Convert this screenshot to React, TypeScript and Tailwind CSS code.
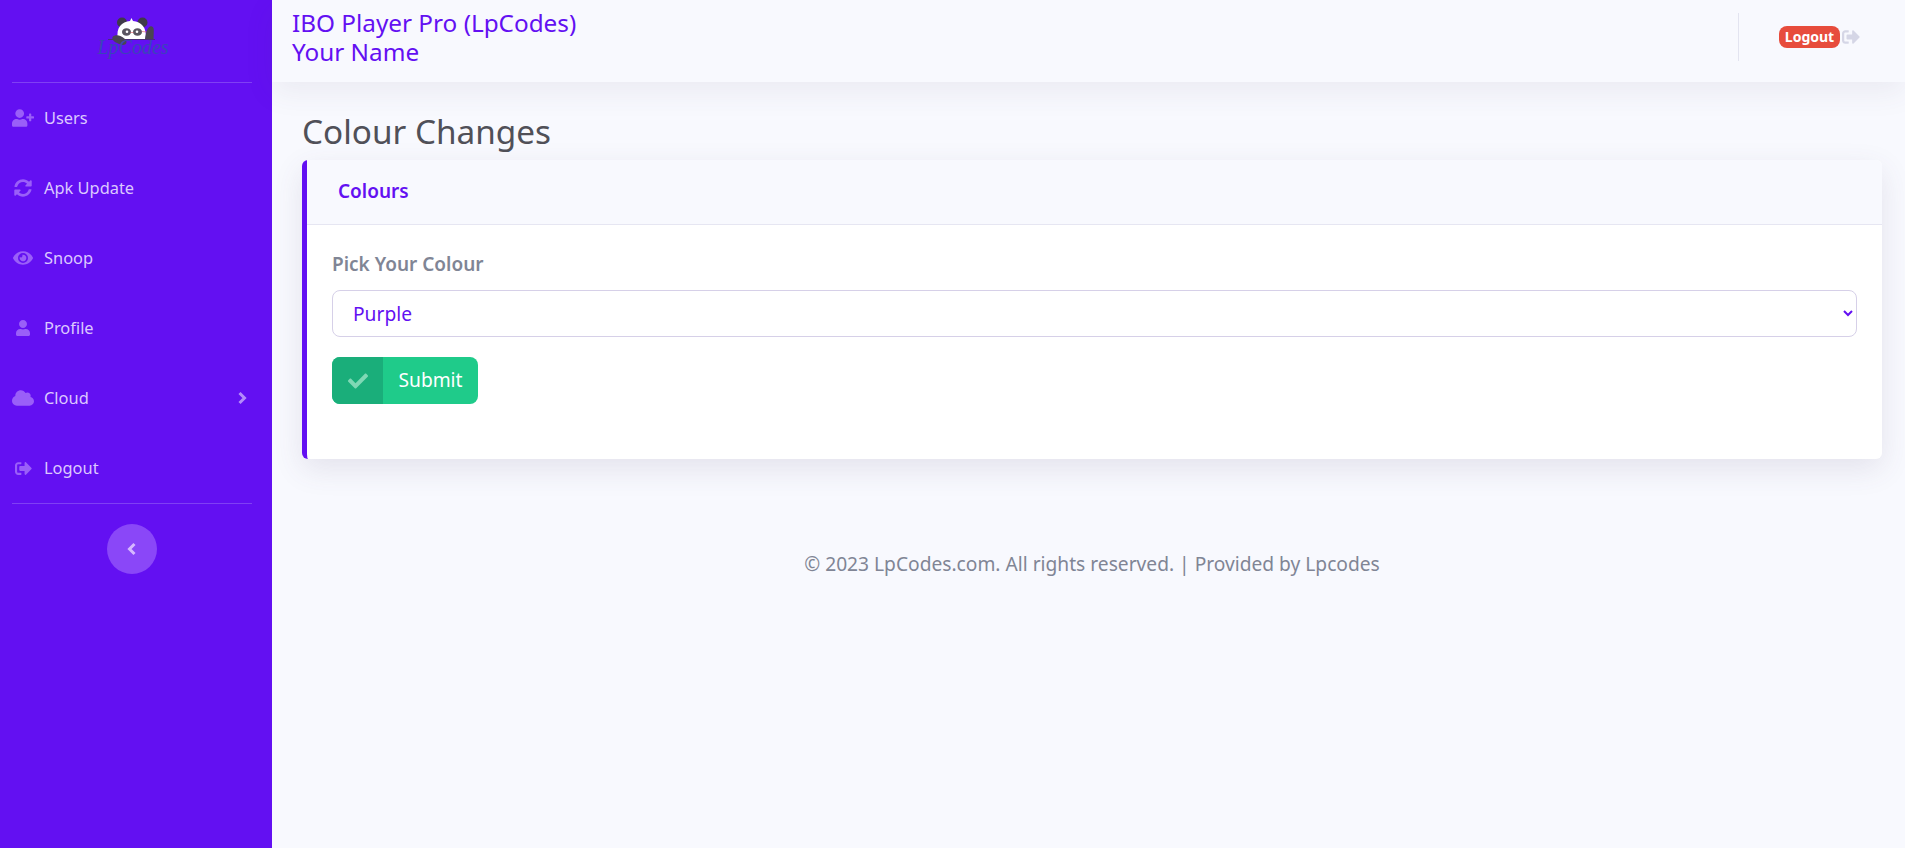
import React from 'react';
import { FaUserPlus, FaSyncAlt, FaEye, FaUser, FaCloud, FaSignOutAlt, FaCheck } from 'react-icons/fa';

const navItems = [
  { label: 'Users', icon: FaUserPlus, size: 22 },
  { label: 'Apk Update', icon: FaSyncAlt, size: 18 },
  { label: 'Snoop', icon: FaEye, size: 20 },
  { label: 'Profile', icon: FaUser, size: 16 },
  { label: 'Cloud', icon: FaCloud, size: 22, arrow: true },
  { label: 'Logout', icon: FaSignOutAlt, size: 17 },
];

const Chevron = ({ flip = false }: { flip?: boolean }) => (
  <svg width="10" height="14" viewBox="0 0 10 14" fill="none" stroke="currentColor" strokeWidth="3">
    <path d={flip ? 'M7.5 2 L2.5 7 L7.5 12' : 'M2.5 2 L7.5 7 L2.5 12'} />
  </svg>
);

const PandaLogo = () => (
  <svg width="52" height="30" viewBox="0 0 52 30" className="block">
    <circle cx="16" cy="5.5" r="5" fill="#3f3a4a" />
    <circle cx="36.5" cy="5.5" r="5" fill="#3f3a4a" />
    <path d="M12 22 C9.5 11 16 4.5 24 4 L25.5 1 L27 4 C35 4.5 41.5 11 39.5 22 Z" fill="#ffffff" />
    <ellipse cx="20.5" cy="15" rx="4.5" ry="3.8" fill="#5a5560" />
    <ellipse cx="31.5" cy="15" rx="4.5" ry="3.8" fill="#5a5560" />
    <circle cx="21" cy="14.8" r="1.3" fill="#ffffff" />
    <circle cx="31" cy="14.8" r="1.3" fill="#ffffff" />
    <path d="M24.5 15.5 H27.5 M36 14.5 L41 15" stroke="#d9545a" strokeWidth="0.6" fill="none" />
    <path d="M2 22.5 H49" stroke="#3f3a4a" strokeWidth="0.7" />
    <path d="M6.5 20 C9 17 15 18 19 22 C22 25 20 28 17 28 C12 27 5 24 6.5 20 Z" fill="#4a4552" />
    <path d="M39 22 C40 16 41 11 44 9.5 C47 8.5 48 11 47.8 14 L47.5 22 Z" fill="#4a4552" />
  </svg>
);

const Sidebar = () => (
  <aside className="w-[272px] shrink-0 h-screen bg-[#6310f2] flex flex-col">
    <div className="h-[82px] w-[264px] flex flex-col items-center pt-[17px] shrink-0">
      <PandaLogo />
      <span className="font-['Liberation_Serif',serif] italic text-[20px] leading-[20px] -mt-[10px] text-[#3a44b8] ml-[2px]">LpCodes</span>
    </div>
    <div className="ml-3 w-[240px] h-px bg-[#8040f4] shrink-0" />
    <nav className="flex flex-col">
      {navItems.map((item) => (
        <a key={item.label} className="h-[70px] flex items-center pl-3 pr-6 text-[16.4px] text-[#dcc8ff]">
          <span className="w-[22px] flex justify-center text-[#9a5ff8]">
            <item.icon size={item.size} />
          </span>
          <span className="ml-[10px] flex-1">{item.label}</span>
          {item.arrow && <span className="text-[#b48cfa] mr-[1px]"><Chevron /></span>}
        </a>
      ))}
    </nav>
    <div className="ml-3 w-[240px] h-px bg-[#8040f4] shrink-0" />
    <button className="mt-5 ml-[107px] w-[50px] h-[50px] rounded-full bg-[#8a47f8] flex items-center justify-center text-[#d6b8ff]">
      <Chevron flip />
    </button>
  </aside>
);

const Topbar = () => (
  <header className="h-[82px] bg-[#f8f9fe] shadow-[0_10px_30px_0_rgba(82,63,105,0.08)] flex items-center justify-between pl-5 relative">
    <div className="text-[24.3px] leading-[29px] text-[#6310f2] -mt-[9px]">
      IBO Player Pro (LpCodes)
      <br />
      Your Name
    </div>
    <div className="flex items-center h-[48px] w-[167px] border-l border-[#e3e4f0] pl-10 -mt-[8px]">
      <span className="bg-[#e74c3c] text-white font-bold text-[14px] leading-[22px] h-[22px] w-[61px] text-center rounded-[8px]">Logout</span>
      <FaSignOutAlt size={18} className="ml-[2px] text-[#d5d6e6]" />
    </div>
  </header>
);

const ColourCard = () => (
  <section className="bg-white rounded-[6px] border-l-[5px] border-[#6310f2] shadow-[0_10px_30px_0_rgba(82,63,105,0.12)] h-[299px]">
    <div className="h-[65px] pb-[2px] bg-[#f8f9fe] border-b border-[#e6e6f2] rounded-tr-[6px] flex items-center pl-[31px]">
      <h3 className="text-[19px] font-semibold text-[#6310f2]">Colours</h3>
    </div>
    <form className="px-[25px] pt-[28px]">
      <label className="block text-[19px] leading-[22px] font-semibold text-[#808595] mb-[15px]">Pick Your Colour</label>
      <select defaultValue="Purple" className="w-full h-[47px] rounded-[8px] border border-[#d6d0e8] bg-white pl-4 pr-1 text-[19.2px] text-[#6310f2]">
        <option>Purple</option>
      </select>
      <button type="button" className="mt-5 h-[47px] w-[146px] rounded-[8px] bg-[#1fcb8a] flex overflow-hidden text-white text-[19.2px]">
        <span className="w-[51px] h-full bg-[#1aae7a] flex items-center justify-center text-[#7fd8b5]">
          <FaCheck size={20} />
        </span>
        <span className="flex-1 h-full flex items-center justify-center">Submit</span>
      </button>
    </form>
  </section>
);

export default function App() {
  return (
    <div className="flex h-screen overflow-hidden bg-[#f8f9fe] font-['Noto_Sans',sans-serif]">
      <Sidebar />
      <div className="flex-1 flex flex-col min-w-0">
        <Topbar />
        <main className="pl-[30px] pr-[23px] flex flex-col">
          <h1 className="text-[33.3px] leading-[40px] mt-[29px] mb-[9px] text-[#505058]">Colour Changes</h1>
          <ColourCard />
          <footer className="mt-[93px] text-center text-[19.2px] leading-[24px] text-[#808595]">© 2023 LpCodes.com. All rights reserved. | Provided by Lpcodes</footer>
        </main>
      </div>
    </div>
  );
}
